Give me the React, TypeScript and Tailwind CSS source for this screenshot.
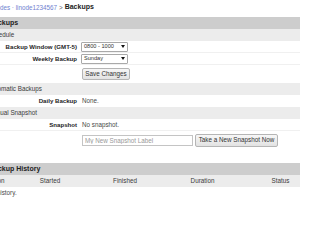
import React from 'react';

const font = { fontFamily: '"Liberation Sans", Arial, sans-serif' };

function FakeSelect({ value }: { value: string }) {
  return (
    <div className="flex h-[10px] w-[47px] items-center justify-between rounded-[1px] border border-[#a9a9a9] bg-white pl-[2px] pr-[2px] text-[5.6px] leading-none text-[#333]">
      <span className="whitespace-nowrap">{value}</span>
      <svg width="4" height="3" viewBox="0 0 4 3">
        <path d="M0 0h4L2 3z" fill="#111" />
      </svg>
    </div>
  );
}

function Header({ children }: { children: React.ReactNode }) {
  return (
    <div className="flex h-[12px] items-center bg-[#cdcdcd] pl-[3px] text-[7px] font-bold text-[#222]">
      {children}
    </div>
  );
}

function SubHeader({ children }: { children: React.ReactNode }) {
  return (
    <div className="flex h-[12px] items-center bg-[#ececec] pl-[2px] text-[6.3px] text-[#3a3a3a]">
      {children}
    </div>
  );
}

function Row({ label, children, border = true }: { label?: string; children: React.ReactNode; border?: boolean }) {
  return (
    <div className={border ? 'grid h-[12px] grid-cols-[95px_1fr] items-center border-b border-[#f0f0f0]' : 'grid grid-cols-[95px_1fr] items-center'}>
      <div className="pr-[4px] text-right text-[6.1px] font-bold text-[#1e1e1e]">{label}</div>
      <div className="text-[6.3px] text-[#4a4a4a]">{children}</div>
    </div>
  );
}

export default function App() {
  return (
    <div className="h-[200px] w-[300px] overflow-hidden bg-white" style={font}>
      <div className="-ml-[14px] w-[340px]">
        {/* Breadcrumb */}
        <div className="flex h-[17px] items-center gap-[2px] pl-[2px] pb-[2px] text-[6.3px]">
          <a className="text-[#6f7fd0]">Linodes · linode1234567</a>
          <span className="text-[#666]">&gt;</span>
          <span className="text-[7px] font-bold text-[#222]">Backups</span>
        </div>

        <Header>Backups</Header>
        <SubHeader>Schedule</SubHeader>
        <Row label="Backup Window (GMT-5)">
          <FakeSelect value="0800 - 1000" />
        </Row>
        <Row label="Weekly Backup">
          <FakeSelect value="Sunday" />
        </Row>
        <div className="grid h-[18px] grid-cols-[96px_1fr] items-center">
          <div />
          <button className="h-[12px] w-[48px] rounded-[2px] border border-[#b5b5b5] bg-gradient-to-b from-[#f7f7f7] to-[#e2e2e2] text-[6.3px] leading-none text-[#333]">
            Save Changes
          </button>
        </div>

        <SubHeader>Automatic Backups</SubHeader>
        <Row label="Daily Backup" border={false}>
          <span className="block h-[12px] pl-[1px] leading-[12px]">None.</span>
        </Row>

        <SubHeader>Manual Snapshot</SubHeader>
        <Row label="Snapshot">
          <span className="pl-[1px]">No snapshot.</span>
        </Row>
        <div className="grid h-[19px] grid-cols-[96px_1fr] items-center">
          <div />
          <div className="flex items-center gap-[2px]">
            <input
              placeholder="My New Snapshot Label"
              className="h-[11px] w-[111px] border border-[#c4c4c4] bg-white px-[2px] text-[6.3px] text-[#333] outline-none placeholder:text-[#999]"
            />
            <button className="h-[13px] w-[83px] rounded-[2px] border border-[#b5b5b5] bg-gradient-to-b from-[#f7f7f7] to-[#e2e2e2] text-[6.3px] leading-none text-[#333]">
              Take a New Snapshot Now
            </button>
          </div>
        </div>

        <div className="h-[13px]" />

        <Header>Backup History</Header>
        <div className="grid h-[12px] grid-cols-[27px_74px_76px_79px_77px] items-center bg-[#ececec] text-[6.3px] text-[#3a3a3a]">
          <div className="pl-[1px]">Action</div>
          <div className="text-center">Started</div>
          <div className="text-center">Finished</div>
          <div className="text-center">Duration</div>
          <div className="text-center">Status</div>
        </div>
        <div className="flex h-[12px] items-center pl-[1px] text-[6.3px] text-[#4a4a4a]">No history.</div>
      </div>
    </div>
  );
}
